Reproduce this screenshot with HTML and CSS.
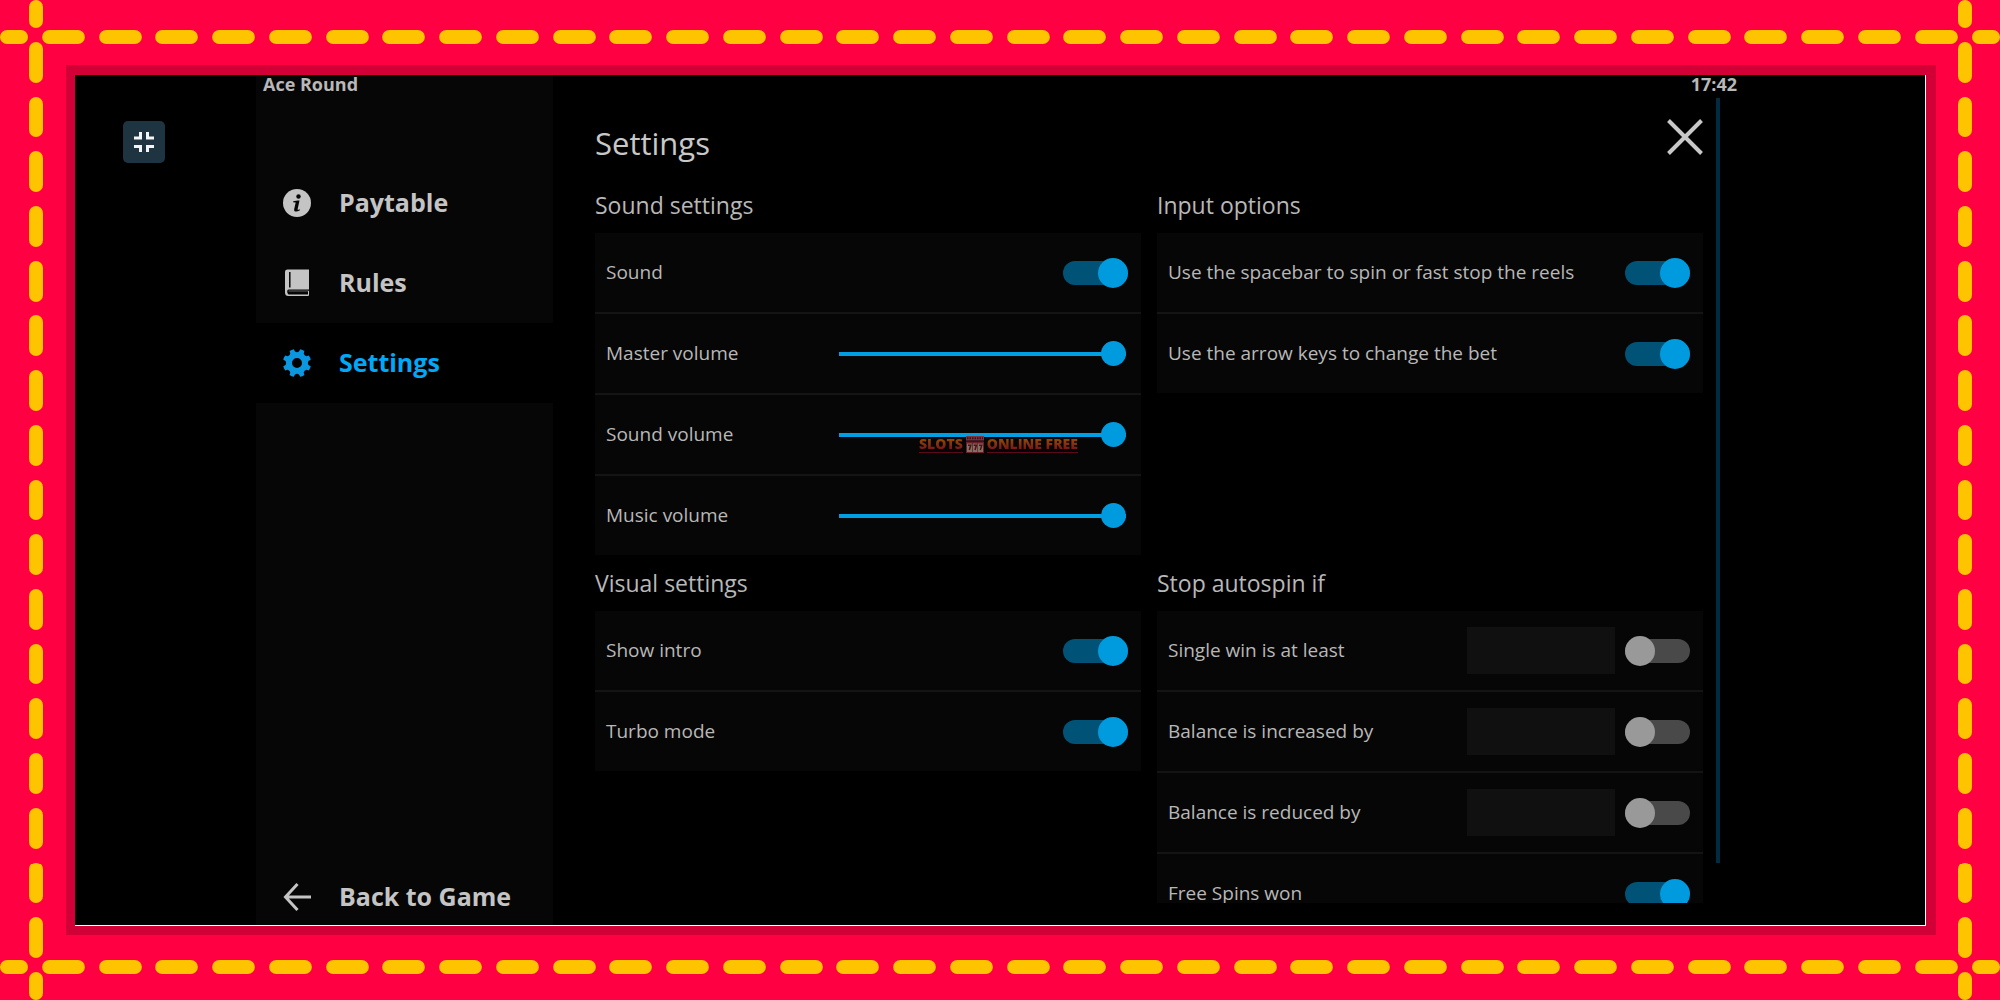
FILE: index.html
```html
<!DOCTYPE html>
<html lang="en">
<head>
<meta charset="utf-8">
<title>Ace Round – Settings</title>
<link rel="stylesheet" href="styles.css">
</head>
<body>
<div class="page">
  <div class="rail rail-x rail-top"><i class="rail-dashes"></i></div>
  <div class="rail rail-x rail-bottom"><i class="rail-dashes"></i></div>
  <div class="rail rail-y rail-left"><i class="rail-dashes"></i></div>
  <div class="rail rail-y rail-right"><i class="rail-dashes"></i></div>

  <div class="game">
    <div class="gutter">
      <button class="shrink" type="button" aria-label="Exit full screen">
        <svg viewBox="0 0 20 20" width="20" height="20" fill="none" stroke="#f2f6f8" stroke-width="3"><path d="M0 6H6.500V0M13.500 0V6H20M0 14.500H6.500V20.500M13.500 20.500V14.500H20"/></svg>
      </button>
    </div>

    <aside class="sidebar">
      <p class="game-name">Ace Round</p>
      <nav class="menu">
        <a class="menu-item" href="#paytable">
          <svg class="menu-icon" viewBox="0 0 28 28"><circle cx="14" cy="14" r="14" fill="currentColor"/><circle cx="15.500" cy="7.500" r="2.200" fill="#060606"/><path d="M10.300 12.300C12 11.700 14 11.400 16.500 11.400L14.600 20.200C14.500 21 15.200 21.100 17 20.300L16.700 21.600C13 23.300 10.600 22.800 11.200 20L12.700 13.500L10.100 13.300Z" fill="#060606"/></svg>
          <span class="menu-text">Paytable</span>
        </a>
        <a class="menu-item" href="#rules">
          <svg class="menu-icon" viewBox="0 0 28 28"><path d="M4.500 .5H26V20.500H5.500Q4.200 20.500 4.200 22.600T5.500 25.600H25V22H26V26Q26 27 25 27H5.500Q2 27 2 23.500V3Q2 .5 4.500 .5Z" fill="currentColor"/><path d="M6.800 3V18.500" stroke="#060606" stroke-width="1.500"/><path d="M5.500 22H26" stroke="currentColor" stroke-width="1" opacity=".5"/></svg>
          <span class="menu-text">Rules</span>
        </a>
        <a class="menu-item menu-item-current" href="#settings" aria-current="page">
          <svg class="menu-icon" viewBox="0 0 28 28"><path fill="#0a97df" fill-rule="evenodd" d="M12 2.600 10.800 .3Q8.500 .7 6.600 2.100L7.300 4.600Q6.800 6.700 4.700 7.200L2.200 6.500Q.7 8.500 .3 10.800L2.600 12Q3.700 14 2.600 16L.3 17.200Q.7 19.500 2.200 21.500L4.700 20.800Q6.800 21.300 7.300 23.400L6.600 25.900Q8.500 27.300 10.800 27.700L12 25.400Q14 24.300 16 25.400L17.200 27.700Q19.500 27.300 21.400 25.900L20.700 23.400Q21.200 21.300 23.300 20.800L25.800 21.500Q27.300 19.500 27.700 17.200L25.400 16Q24.300 14 25.400 12L27.700 10.800Q27.300 8.500 25.800 6.500L23.300 7.200Q21.200 6.700 20.700 4.600L21.400 2.100Q19.500 .7 17.200 .3L16 2.600Q14 3.700 12 2.600ZM14 9A5 5 0 1 0 14 19A5 5 0 1 0 14 9Z"/></svg>
          <span class="menu-text">Settings</span>
        </a>
      </nav>
      <a class="menu-item menu-back" href="#game">
        <svg class="menu-icon" viewBox="0 0 28 28" fill="none" stroke="currentColor" stroke-width="3"><path d="M14.500 1 2.500 14 14.500 27M2 14H28"/></svg>
        <span class="menu-text">Back to Game</span>
      </a>
    </aside>

    <main class="main">
      <div class="status"><time>17:42</time></div>
      <div class="body">
        <div class="scroll">
          <header class="header">
            <h1 class="title">Settings</h1>
            <button class="close" type="button" aria-label="Close">
              <svg viewBox="0 0 36 36" width="36" height="36" fill="none" stroke="#c8c8c8" stroke-width="4"><path d="M1.500 1.500 34.500 34.500M34.500 1.500 1.500 34.500"/></svg>
            </button>
          </header>

          <div class="groups">
            <section class="group">
              <h2 class="group-title">Sound settings</h2>
              <div class="card">
                <div class="row"><label class="label" for="sound">Sound</label><input class="toggle" id="sound" type="checkbox" checked></div>
                <div class="row"><label class="label" for="master">Master volume</label><input class="slider" id="master" type="range" value="100"></div>
                <div class="row"><label class="label" for="effects">Sound volume</label><input class="slider" id="effects" type="range" value="100">
                  <div class="watermark"><span class="watermark-text">SLOTS</span><svg viewBox="0 0 18 17" width="18" height="17"><path d="M0 0H18V4.500H0Z" fill="#7d3540"/><path d="M1 2.300H17" stroke="#3b1018" stroke-width="2" stroke-dasharray="1.500 1"/><path d="M0 5.500H18V17H0Z" fill="#6b2028"/><path d="M1 7.500H6V16H1ZM6.800 7.500H11.300V16H6.800ZM12 7.500H17V16H12Z" fill="#7f7468"/><path d="M2 9.300H4.800L3.300 14M7.700 9.300H10.400L9 14M13 9.300H15.800L14.300 14" fill="none" stroke="#5c0b16" stroke-width="1.500"/></svg><span class="watermark-text">ONLINE FREE</span></div>
                </div>
                <div class="row"><label class="label" for="music">Music volume</label><input class="slider" id="music" type="range" value="100"></div>
              </div>
            </section>

            <section class="group">
              <h2 class="group-title">Input options</h2>
              <div class="card">
                <div class="row"><label class="label" for="space">Use the spacebar to spin or fast stop the reels</label><input class="toggle" id="space" type="checkbox" checked></div>
                <div class="row"><label class="label" for="arrows">Use the arrow keys to change the bet</label><input class="toggle" id="arrows" type="checkbox" checked></div>
              </div>
            </section>

            <section class="group">
              <h2 class="group-title">Visual settings</h2>
              <div class="card">
                <div class="row"><label class="label" for="intro">Show intro</label><input class="toggle" id="intro" type="checkbox" checked></div>
                <div class="row"><label class="label" for="turbo">Turbo mode</label><input class="toggle" id="turbo" type="checkbox" checked></div>
              </div>
            </section>

            <section class="group">
              <h2 class="group-title">Stop autospin if</h2>
              <div class="card">
                <div class="row"><label class="label" for="win">Single win is at least</label><input class="amount" type="text" aria-label="Single win amount"><input class="toggle" id="win" type="checkbox"></div>
                <div class="row"><label class="label" for="increase">Balance is increased by</label><input class="amount" type="text" aria-label="Balance increase amount"><input class="toggle" id="increase" type="checkbox"></div>
                <div class="row"><label class="label" for="reduce">Balance is reduced by</label><input class="amount" type="text" aria-label="Balance reduction amount"><input class="toggle" id="reduce" type="checkbox"></div>
                <div class="row"><label class="label" for="free">Free Spins won</label><input class="toggle" id="free" type="checkbox" checked></div>
              </div>
            </section>
          </div>
        </div>
        <div class="scrollbar"></div>
      </div>
    </main>
  </div>
</div>
</body>
</html>
```
FILE: styles.css
```css
* {
  box-sizing: border-box;
}

body {
  margin: 0;
  background: #ff0043;
  color: #b8b8b8;
  font-family: "Open Sans", "Noto Sans", sans-serif;
}

h1, h2, p {
  margin: 0;
  font-weight: 400;
}

button {
  padding: 0;
  border: 0;
  cursor: pointer;
}

/* Red frame with dashed rails that cross at the corners */
.page {
  display: grid;
  grid-template-columns: 29px 14px minmax(0, 1fr) 14px 28px;
  grid-template-rows: 30px 14px minmax(0, 1fr) 14px 26px;
  height: 100vh;
}

.rail {
  display: flex;
}

.rail::before,
.rail::after {
  content: "";
  flex: none;
  width: 28px;
  height: 14px;
  border-radius: 7px;
  background: #ffc400;
}

.rail-dashes {
  flex: 1;
  margin: 0 7px;
  background: url("data:image/svg+xml,%3Csvg xmlns='http://www.w3.org/2000/svg' viewBox='0 0 56 14' preserveAspectRatio='none'%3E%3Crect x='7' width='42' height='14' rx='7' fill='%23ffc400'/%3E%3C/svg%3E") 0 0 / 56px 14px round no-repeat;
}

.rail-y {
  flex-direction: column;
}

.rail-y::before,
.rail-y::after {
  width: 14px;
  height: 28px;
}

.rail-y .rail-dashes {
  margin: 7px 0;
  background: url("data:image/svg+xml,%3Csvg xmlns='http://www.w3.org/2000/svg' viewBox='0 0 14 55' preserveAspectRatio='none'%3E%3Crect y='7' width='14' height='41' rx='7' fill='%23ffc400'/%3E%3C/svg%3E") 0 0 / 14px 55px no-repeat round;
}

.rail-top {
  grid-area: 2 / 1 / 3 / -1;
}

.rail-bottom {
  grid-area: 4 / 1 / 5 / -1;
}

.rail-left {
  grid-area: 1 / 2 / -1 / 3;
}

.rail-right {
  grid-area: 1 / 4 / -1 / 5;
}

/* Game window */
.game {
  grid-area: 3 / 3 / 4 / 4;
  display: grid;
  grid-template-columns: 181fr 297fr 1372fr;
  grid-template-rows: minmax(0, 1fr);
  margin: 21px 22px 25px 23px;
  border: solid #d10037;
  border-width: 10px 10px 9px 9px;
  background: #000;
  box-shadow: inset -1px -1px #fff;
  padding: 0 1px 1px 0;
}

.gutter {
  padding: 46px 0 0 48px;
}

.shrink {
  display: grid;
  place-items: center;
  width: 42px;
  height: 42px;
  border-radius: 5px;
  background: #1e3441;
}

/* Sidebar */
.sidebar {
  display: flex;
  flex-direction: column;
  background: #060606;
}

.game-name {
  height: 88px;
  padding-left: 7px;
  font-size: 18px;
  font-weight: 700;
  line-height: 18px;
}

.menu-item {
  display: flex;
  align-items: center;
  gap: 28px;
  height: 80px;
  padding-left: 27px;
  color: #c4c4c4;
  font-size: 25px;
  font-weight: 700;
  text-decoration: none;
}

.menu-text {
  padding-bottom: 3px;
}

.menu-item-current {
  background: #000;
  color: #00a9f7;
}

.menu-back {
  height: 56px;
  margin-top: auto;
}

.menu-icon {
  flex: none;
  width: 28px;
  height: 28px;
}

/* Main area */
.main {
  display: flex;
  flex-direction: column;
  padding: 0 188px 0 42px;
}

.status {
  height: 23px;
  font-size: 18px;
  font-weight: 700;
  line-height: 18px;
  text-align: right;
}

.body {
  display: flex;
  flex: 1;
  gap: 13px;
  min-height: 0;
  padding-right: 17px;
}

.scroll {
  flex: 1;
  margin-bottom: 22px;
  overflow: hidden;
}

.scrollbar {
  width: 4px;
  margin-bottom: 62px;
  background: #002b40;
}

.header {
  display: flex;
  align-items: center;
  justify-content: space-between;
  height: 80px;
  padding-top: 10px;
}

.title {
  color: #c8c8c8;
  font-size: 31px;
}

.close {
  align-self: flex-start;
  height: 36px;
  margin-top: 11px;
  background: none;
}

.groups {
  display: grid;
  grid-template-columns: repeat(2, minmax(0, 1fr));
  gap: 1px 16px;
}

.group-title {
  padding-bottom: 1px;
  font-size: 23px;
  line-height: 54px;
}

.card {
  background: #060606;
}

.row {
  position: relative;
  display: flex;
  align-items: center;
  gap: 10px;
  height: 79px;
  padding: 0 13px 0 11px;
}

.row + .row {
  height: 81px;
  border-top: 2px solid #141414;
}

.label {
  flex: 1;
  padding-bottom: 1px;
  font-size: 19px;
}

/* Controls */
.toggle {
  appearance: none;
  display: flex;
  align-items: center;
  width: 65px;
  height: 24px;
  margin: 0;
  border-radius: 12px;
  background: #494949;
}

.toggle::before {
  content: "";
  width: 30px;
  height: 30px;
  border-radius: 50%;
  background: #999;
}

.toggle:checked {
  justify-content: flex-end;
  background: #005277;
}

.toggle:checked::before {
  background: #009bde;
}

.slider {
  appearance: none;
  width: 55%;
  height: 25px;
  margin: 0 2px 0 0;
  background: linear-gradient(#009fe3, #009fe3) center / 100% 4px no-repeat;
}

.slider::-webkit-slider-thumb {
  appearance: none;
  width: 25px;
  height: 25px;
  border-radius: 50%;
  background: #009bde;
}

.slider::-moz-range-thumb {
  width: 25px;
  height: 25px;
  border: 0;
  border-radius: 50%;
  background: #009bde;
}

.amount {
  width: 148px;
  height: 47px;
  padding: 0 10px;
  border: 0;
  background: #101010;
  color: #b8b8b8;
  font: inherit;
}

/* Site mark over the volume row */
.watermark {
  position: absolute;
  top: 40px;
  right: 63px;
  display: flex;
  gap: 3px;
  align-items: center;
  pointer-events: none;
}

.watermark-text {
  border-bottom: 1px solid #5a0a1c;
  background: linear-gradient(#8f4e06 20%, #7c1418 85%) text;
  color: transparent;
  font-size: 14px;
  font-weight: 800;
  line-height: 17px;
}
```
